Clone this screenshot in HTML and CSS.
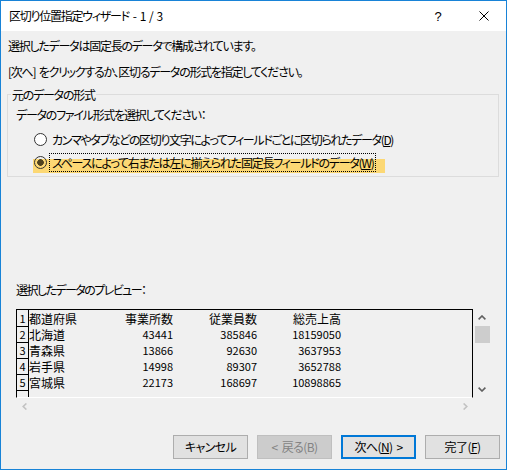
FILE: index.html
```html
<!DOCTYPE html>
<html lang="ja">
<head>
<meta charset="utf-8">
<title>区切り位置指定ウィザード</title>
<link rel="stylesheet" href="styles.css">
</head>
<body>
<div class="window">
  <div class="titlebar">
    <div class="title">区切り位置指定ウィザード - 1 / 3</div>
    <span class="help">?</span>
    <svg class="close" width="10" height="10" viewBox="0 0 10 10"><path d="M0.5 0.5L9.5 9.5M9.5 0.5L0.5 9.5" stroke="#000" stroke-width="1" fill="none"/></svg>
  </div>
  <div class="content">
    <p class="line l1">選択したデータは固定長のデータで構成されています。</p>
    <p class="line l2">[次へ] をクリックするか、区切るデータの形式を指定してください。</p>
    <fieldset class="group">
      <legend>元のデータの形式</legend>
      <div class="group-body">
        <div class="prompt">データのファイル形式を選択してください：</div>
        <div class="radio-row">
          <span class="radio"></span>
          <span class="radio-label r1">カンマやタブなどの区切り文字によってフィールドごとに区切られたデータ(<u>D</u>)</span>
        </div>
        <div class="radio-row hl">
          <span class="radio checked"></span>
          <span class="radio-label focus">スペースによって右または左に揃えられた固定長フィールドのデータ(<u>W</u>)</span>
        </div>
      </div>
    </fieldset>
    <div class="preview-label">選択したデータのプレビュー：</div>
    <div class="preview">
      <div class="data-box">
        <div class="row"><span class="num">1</span><span class="c name">都道府県</span><span class="c r">事業所数</span><span class="c r">従業員数</span><span class="c r">総売上高</span></div>
        <div class="row"><span class="num">2</span><span class="c name">北海道</span><span class="c r n">43441</span><span class="c r n">385846</span><span class="c r n">18159050</span></div>
        <div class="row"><span class="num">3</span><span class="c name">青森県</span><span class="c r n">13866</span><span class="c r n">92630</span><span class="c r n">3637953</span></div>
        <div class="row"><span class="num">4</span><span class="c name">岩手県</span><span class="c r n">14998</span><span class="c r n">89307</span><span class="c r n">3652788</span></div>
        <div class="row"><span class="num">5</span><span class="c name">宮城県</span><span class="c r n">22173</span><span class="c r n">168697</span><span class="c r n">10898865</span></div>
        <div class="row"><span class="num"></span></div>
      </div>
      <div class="vscroll">
        <div class="varrow"><svg width="8" height="5" viewBox="0 0 8 5"><path d="M0.6 4.4L4 1L7.4 4.4" stroke="#606060" stroke-width="1.6" fill="none"/></svg></div>
        <div class="thumb"></div>
        <div class="vspace"></div>
        <div class="varrow"><svg width="8" height="5" viewBox="0 0 8 5"><path d="M0.6 0.6L4 4L7.4 0.6" stroke="#606060" stroke-width="1.6" fill="none"/></svg></div>
      </div>
      <div class="hscroll">
        <div class="harrow"><svg width="5" height="7" viewBox="0 0 5 7"><path d="M4.4 0.5L1.2 3.5L4.4 6.5" stroke="#c2c2c2" stroke-width="1.6" fill="none"/></svg></div>
        <div class="harrow"><svg width="5" height="7" viewBox="0 0 5 7"><path d="M0.6 0.5L3.8 3.5L0.6 6.5" stroke="#c2c2c2" stroke-width="1.6" fill="none"/></svg></div>
      </div>
    </div>
  </div>
  <div class="footer">
    <button class="btn">キャンセル</button>
    <button class="btn disabled">&lt; 戻る(B)</button>
    <button class="btn default">次へ(<u>N</u>) &gt;</button>
    <button class="btn">完了(<u>F</u>)</button>
  </div>
</div>
</body>
</html>
```

FILE: styles.css
```css
body {
  margin: 0;
}

.window {
  width: 507px;
  height: 470px;
  box-sizing: border-box;
  border: 1px solid #1883d7;
  display: flex;
  flex-direction: column;
  background: #f0f0f0;
  font-family: "Noto Sans CJK JP", "Noto Sans", sans-serif;
  font-size: 12px;
  color: #000;
  font-feature-settings: "palt";
  letter-spacing: -1.25px;
  word-spacing: 2px;
}

.titlebar {
  height: 30px;
  flex-shrink: 0;
  background: #fff;
  display: flex;
  align-items: center;
}

.title {
  flex: 1;
  padding-left: 8px;
  line-height: 16px;
  word-spacing: 2.5px;
}

.help {
  width: 8px;
  text-align: center;
  font-family: "Liberation Sans", sans-serif;
  font-size: 13px;
  letter-spacing: 0;
  margin-right: 37px;
}

.close {
  display: block;
  margin-right: 17px;
}

.content {
  flex: 1;
  padding: 0 7px 0 6px;
}

.line {
  margin: 0;
  padding-left: 1px;
  line-height: 16px;
}

.l1 {
  margin-top: 7px;
}

.l2 {
  margin-top: 10px;
}

.group {
  margin: 6px 0 0;
  padding: 0 0 3px;
  border: 1px solid #dcdcdc;
  min-width: 0;
}

.group legend {
  margin-left: 3px;
  padding: 0 1px;
  line-height: 17px;
}

.group-body {
  padding-left: 8px;
}

.prompt {
  margin-top: 4px;
  line-height: 16px;
}

.radio-row {
  display: flex;
  align-items: center;
  height: 19px;
  margin-left: 17px;
  margin-top: 7px;
}

.radio-row.hl {
  height: 20px;
  width: 352px;
  margin-top: 4px;
  align-items: flex-start;
  background: linear-gradient(to bottom, transparent 6px, #fcd874 6px);
}

.radio {
  width: 13px;
  height: 13px;
  box-sizing: border-box;
  border: 1px solid #333;
  border-radius: 50%;
  background: #fff;
  margin-left: 1px;
  flex-shrink: 0;
}

.radio.checked {
  margin-top: 3px;
  background: radial-gradient(circle, #4f4320 3px, transparent 3.6px);
}

.radio-label {
  margin-left: 2px;
  padding-left: 2px;
  padding-right: 1px;
  border: 1px dotted transparent;
  line-height: 17px;
  white-space: nowrap;
}

.radio-label.r1 {
  letter-spacing: -1.35px;
}

.radio-label.focus {
  border-color: #000;
}

.preview-label {
  margin-top: 105px;
  padding-left: 9px;
  line-height: 16px;
  letter-spacing: -1.55px;
}

.preview {
  margin-top: 11px;
  margin-left: 9px;
  display: grid;
  grid-template-columns: 457px 17px;
  grid-template-rows: 89px 16px;
}

.data-box {
  box-sizing: border-box;
  border: 1px solid #000;
  border-bottom-color: #fff;
  overflow: hidden;
  font-feature-settings: normal;
  letter-spacing: 0;
  word-spacing: 0;
}

.row {
  display: grid;
  grid-template-columns: 12px 60px 84px 84px 84px;
  height: 16px;
}

.num {
  box-sizing: border-box;
  border-right: 1px solid #000;
  border-bottom: 1px solid #000;
  text-align: center;
  font-size: 11px;
  line-height: 15px;
  padding-top: 1px;
}

.c {
  line-height: 15px;
  padding-top: 1px;
  white-space: nowrap;
}

.r {
  text-align: right;
}

.n {
  font-size: 11px;
}

.vscroll {
  display: flex;
  flex-direction: column;
}

.varrow {
  height: 17px;
  display: flex;
  align-items: center;
  justify-content: center;
}

.varrow svg,
.harrow svg {
  display: block;
}

.thumb {
  width: 15px;
  height: 17px;
  margin-left: 2px;
  background: #cdcdcd;
}

.vspace {
  flex: 1;
}

.hscroll {
  display: flex;
  justify-content: space-between;
}

.harrow {
  width: 16px;
  display: flex;
  align-items: center;
  justify-content: center;
}

.footer {
  flex-shrink: 0;
  display: flex;
  justify-content: flex-end;
  gap: 9px;
  padding: 0 6px 10px 0;
}

.btn {
  width: 75px;
  height: 24px;
  box-sizing: border-box;
  border: 1px solid #adadad;
  background: #e1e1e1;
  font-family: inherit;
  font-size: 12px;
  font-feature-settings: "palt";
  letter-spacing: -0.6px;
  word-spacing: 2px;
  color: #000;
  padding: 0;
  margin: 0;
  line-height: 16px;
  display: flex;
  align-items: center;
  justify-content: center;
}

.btn.disabled {
  background: #cccccc;
  border-color: #bfbfbf;
  color: #838383;
}

.btn.default {
  border: 2px solid #0078d7;
}
```
